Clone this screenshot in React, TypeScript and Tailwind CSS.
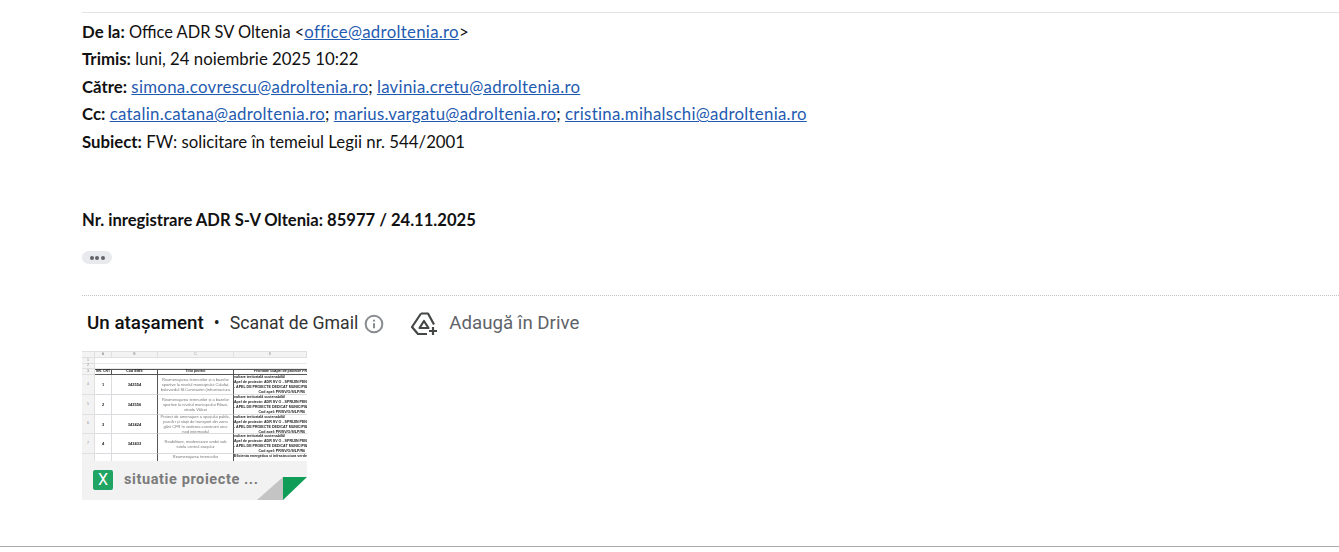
const cell = 'border-r border-b border-[#dadce0] overflow-hidden flex items-center justify-center text-center leading-[5px] text-[4px]';
const head = 'border-r border-b border-[#e0e0e0] bg-[#f3f3f3] flex items-center justify-center text-[3.5px] text-[#888]';
const link = 'text-[#1f5bb0] underline tracking-[0.3px]';

const rows = [
  { nr: '4', idx: '1', cod: '342554', titlu: 'Reamenajarea terenurilor și a bazelor sportive la nivelul municipiului Calafat, bulevardul Sf.Constantin (infrastructura' },
  { nr: '5', idx: '2', cod: '342556', titlu: 'Reamenajarea terenurilor și a bazelor sportive la nivelul municipiului Filiasi, strada Vâlcei' },
  { nr: '6', idx: '3', cod: '343424', titlu: 'Proiect de amenajare a spațiului public, parcări și stații de transport din zona gării CFR în vederea construirii unui nod intermodal' },
  { nr: '7', idx: '4', cod: '343433', titlu: 'Reabilitare, modernizare ambii sub tutela centrul orașului' },
];

const Thumbnail = () => (
  <div className="relative w-[225px] h-[149px] overflow-hidden border-t border-[#e0e0e0] bg-white">
    <div className="blur-[0.35px] grid grid-cols-[13px_17px_46px_76px_73px] grid-rows-[6px_6px_5px_6px_20px_20px_19px_20px_20px] text-[#222] font-['Liberation_Sans',sans-serif]">
      <div className={head} />
      <div className={head}>A</div>
      <div className={head}>B</div>
      <div className={head}>C</div>
      <div className={head}>D</div>
      <div className={head}>1</div>
      <div className="col-span-4 border-b border-[#e8e8e8]" />
      <div className={head}>2</div>
      <div className="col-span-4 border-b border-[#e8e8e8]" />
      <div className={head}>3</div>
      <div className="border-y border-r border-[#555] text-[3.5px] font-bold flex items-center justify-center whitespace-nowrap">NR. CRT</div>
      <div className="border-y border-r border-[#555] text-[3.5px] font-bold flex items-center justify-center whitespace-nowrap">Cod SMIS</div>
      <div className="border-y border-r border-[#555] text-[3.5px] font-bold flex items-center justify-center whitespace-nowrap">Titlu proiect</div>
      <div className="border-y border-[#555] text-[3.5px] font-bold flex items-center justify-end whitespace-nowrap overflow-hidden">Prioritate si/Apel de proiecte PR</div>
      {rows.map(r => (
        <div key={r.nr} className="contents">
          <div className={head}>{r.nr}</div>
          <div className={`${cell} font-bold`}>{r.idx}</div>
          <div className={`${cell} font-bold border-r-[#555]`}>{r.cod}</div>
          <div className={`${cell} text-[#777] px-[2px] border-r-[#555]`}>{r.titlu}</div>
          <div className="border-b border-[#dadce0] overflow-hidden text-right text-[3.6px] leading-[5px] font-bold whitespace-nowrap">
            <div className="text-left">voltare teritorială sustenabilă/</div>
            <div>Apel de proiecte: ADR SV O - SPRIJIN PENT</div>
            <div>- APEL DE PROIECTE DEDICAT MUNICIPIILO</div>
            <div className="pr-[2px]">Cod apel: PR/SV/O/S/LP/R6</div>
          </div>
        </div>
      ))}
      <div className={head}>8</div>
      <div className="border-r border-[#dadce0]" />
      <div className="border-r border-[#555]" />
      <div className="border-r border-[#555] text-[4px] text-[#777] text-center overflow-hidden">Reamenajarea terenurilor</div>
      <div className="text-[3.6px] font-bold whitespace-nowrap overflow-hidden">Eficienta energetica si infrastructura verde</div>
    </div>
    {/* file name bar */}
    <div className="absolute inset-x-0 bottom-0 h-[39px] bg-[#f2f2f2] flex items-center pl-[11px] pb-[1px] gap-[11px]">
      <div className="w-5 h-5 rounded-[2px] bg-[#1fa463] flex items-center justify-center text-white text-[16px] font-['Roboto',sans-serif]">X</div>
      <span className="font-['Roboto',sans-serif] font-bold text-[14.5px] tracking-[0.6px] text-[#7b7b7b] whitespace-nowrap">situatie proiecte ...</span>
    </div>
    <svg className="absolute right-0 bottom-0" width="50" height="24" viewBox="0 0 50 24">
      <polygon points="0,24 26,1 26,24" fill="#c4c4c4" />
      <polygon points="26,24 50,1 50,24" fill="#ffffff" />
      <polygon points="26,1 50,1 26,24" fill="#0f9d58" />
    </svg>
  </div>
);

export default function App() {
  return (
    <div className="h-[552px] w-full bg-white flex flex-col overflow-hidden">
      <div className="flex-1 pl-[82px] pt-3">
        <div className="border-t border-[#e3e3e3] pt-[4.5px] font-['Lato',sans-serif] text-[16.8px] leading-[27.5px] text-[#111]">
          <div><b>De la:</b> <span className="text-[16.4px]">Office ADR SV Oltenia &lt;</span><a className={link}>office@adroltenia.ro</a>&gt;</div>
          <div><b>Trimis:</b> luni, 24 noiembrie 2025 10:22</div>
          <div><b>Către:</b> <a className={link}>simona.covrescu@adroltenia.ro</a>; <a className={link}>lavinia.cretu@adroltenia.ro</a></div>
          <div><b>Cc:</b> <a className={link}>catalin.catana@adroltenia.ro</a>; <a className={link}>marius.vargatu@adroltenia.ro</a>; <a className={link}>cristina.mihalschi@adroltenia.ro</a></div>
          <div><b>Subiect:</b> FW: solicitare în temeiul Legii nr. 544/2001</div>
          <div className="mt-[52px] font-bold text-[16.6px]">Nr. inregistrare ADR S-V Oltenia: 85977 / 24.11.2025</div>
        </div>
        <div className="mt-[16.5px] w-[30px] h-[13px] rounded-full bg-[#e8eaed] flex items-center justify-center gap-[1.5px]">
          <span className="w-[4px] h-[4px] rounded-full bg-[#5f6368]" />
          <span className="w-[4px] h-[4px] rounded-full bg-[#5f6368]" />
          <span className="w-[4px] h-[4px] rounded-full bg-[#5f6368]" />
        </div>
        <div className="mt-[31px] border-t border-dotted border-[#c4c4c4] h-[56px] pl-[5px] flex items-center font-['Roboto',sans-serif] text-[17.7px] text-[#222]">
          <b className="font-medium text-[18.8px] text-[#111]">Un atașament</b>
          <span className="ml-[10px] mr-[10px] text-[#222]">•</span>
          <span className="text-[#333]">Scanat de Gmail</span>
          <svg className="ml-[6px]" width="20" height="20" viewBox="0 0 24 24" fill="none" stroke="#888c90" strokeWidth="2.4">
            <circle cx="12" cy="12" r="10" />
            <path d="M12 11v6M12 7v2" />
          </svg>
          <svg className="ml-[26px]" width="28" height="24" viewBox="0 0 28 24" fill="none" stroke="#444746" strokeWidth="2.2" strokeLinejoin="round">
            <path d="M11 1.5h7l6 11M11 1.5L2 15l6 7h9" />
            <path d="M14 9l4.5 7h-9z" />
            <path d="M23 15v8M19 19h8" />
          </svg>
          <span className="ml-[11px] text-[18.7px] text-[#5f6368]">Adaugă în Drive</span>
        </div>
        <Thumbnail />
      </div>
      <div className="h-[1px] bg-[#aaaaaa] mb-[5px]" />
    </div>
  );
}
